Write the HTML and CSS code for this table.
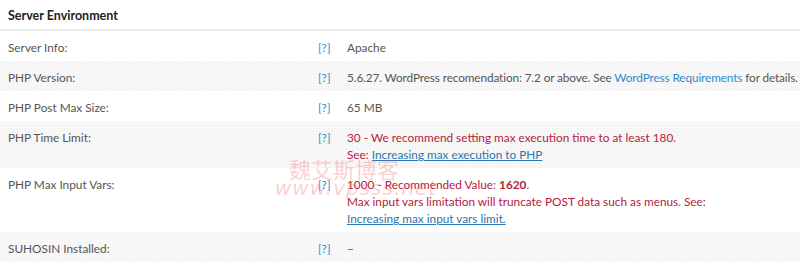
FILE: index.html
```html
<!DOCTYPE html>
<html lang="en">
<head>
    <meta charset="UTF-8">
    <title>System Status</title>
    <link rel="stylesheet" href="styles.css">
</head>
<body>
    <div class="status-box">
        <h2 class="status-title">Server Environment</h2>

        <div class="status-row">
            <div class="label">Server Info:</div>
            <div class="help">[?]</div>
            <div class="value">Apache</div>
        </div>
        <div class="status-row alt">
            <div class="label">PHP Version:</div>
            <div class="help">[?]</div>
            <div class="value tight">5.6.27. WordPress recomendation: 7.2 or above. See <a href="#" class="plain-link">WordPress Requirements</a> for details.</div>
        </div>
        <div class="status-row">
            <div class="label">PHP Post Max Size:</div>
            <div class="help">[?]</div>
            <div class="value">65 MB</div>
        </div>
        <div class="status-row alt">
            <div class="label">PHP Time Limit:</div>
            <div class="help">[?]</div>
            <div class="value error">30 - We recommend setting max execution time to at least 180.<br>See: <a href="#">Increasing max execution to PHP</a></div>
        </div>
        <div class="status-row">
            <div class="label">PHP Max Input Vars:</div>
            <div class="help">[?]</div>
            <div class="value error">1000 - Recommended Value: <strong>1620</strong>.<br>Max input vars limitation will truncate POST data such as menus. See:<br><a href="#">Increasing max input vars limit.</a></div>
        </div>
        <div class="status-row alt">
            <div class="label">SUHOSIN Installed:</div>
            <div class="help">[?]</div>
            <div class="value">&ndash;</div>
        </div>
        <div class="status-row">
            <div class="label">Fileinfo Library:</div>
            <div class="help">[?]</div>
            <div class="value">&#10003;</div>
        </div>

        <!-- 블로그 워터마크 -->
        <div class="stamp">
            <span class="stamp-cn">魏艾斯博客</span>
            <span class="stamp-url">www.vpsss.net</span>
        </div>
    </div>
</body>
</html>
```

FILE: styles.css
```css
* {
    margin: 0;
    padding: 0;
    box-sizing: border-box;
}

body {
    font-family: 'Lato', 'Open Sans', sans-serif;
    font-size: 11.8px;
    color: #555;
    background-color: #fff;
}

.status-box {
    position: relative;
    width: 800px;
    height: 274px;
    overflow: hidden;
}

.status-title {
    font-size: 12.5px;
    font-weight: bold;
    color: #222;
    padding: 8px 8px 0;
    height: 31px;
    border-bottom: 2px solid #ececec;
}

.status-row {
    display: grid;
    grid-template-columns: 318px 29px 1fr;
    padding: 8px 0 5px;
    line-height: 17px;
}

.status-row.alt {
    background-color: #f8f8f8;
    background-image: radial-gradient(#eeeeee 0.6px, transparent 0.8px);
    background-size: 3px 3px;
}

.label {
    padding-left: 8px;
}

.help {
    color: #3a86c0;
}

.value {
    white-space: nowrap;
}

/* 긴 한 줄 값 */
.value.tight {
    letter-spacing: -0.12px;
}

.value a {
    color: #2b76ad;
}

.value .plain-link {
    color: #2f8ac9;
    text-decoration: none;
}

.error {
    color: #b5213a;
}

.error strong {
    font-weight: bold;
}

/* 워터마크 */
.stamp {
    position: absolute;
    left: 275px;
    top: 157px;
    display: flex;
    flex-direction: column;
    color: rgba(240, 110, 110, 0.32);
    pointer-events: none;
}

.stamp-cn {
    font-family: 'Noto Sans CJK SC', sans-serif;
    font-size: 22px;
    line-height: 22px;
    padding-left: 14px;
}

.stamp-url {
    font-family: 'DejaVu Sans', sans-serif;
    font-style: italic;
    font-size: 20px;
    line-height: 18px;
    letter-spacing: 1px;
}
```
